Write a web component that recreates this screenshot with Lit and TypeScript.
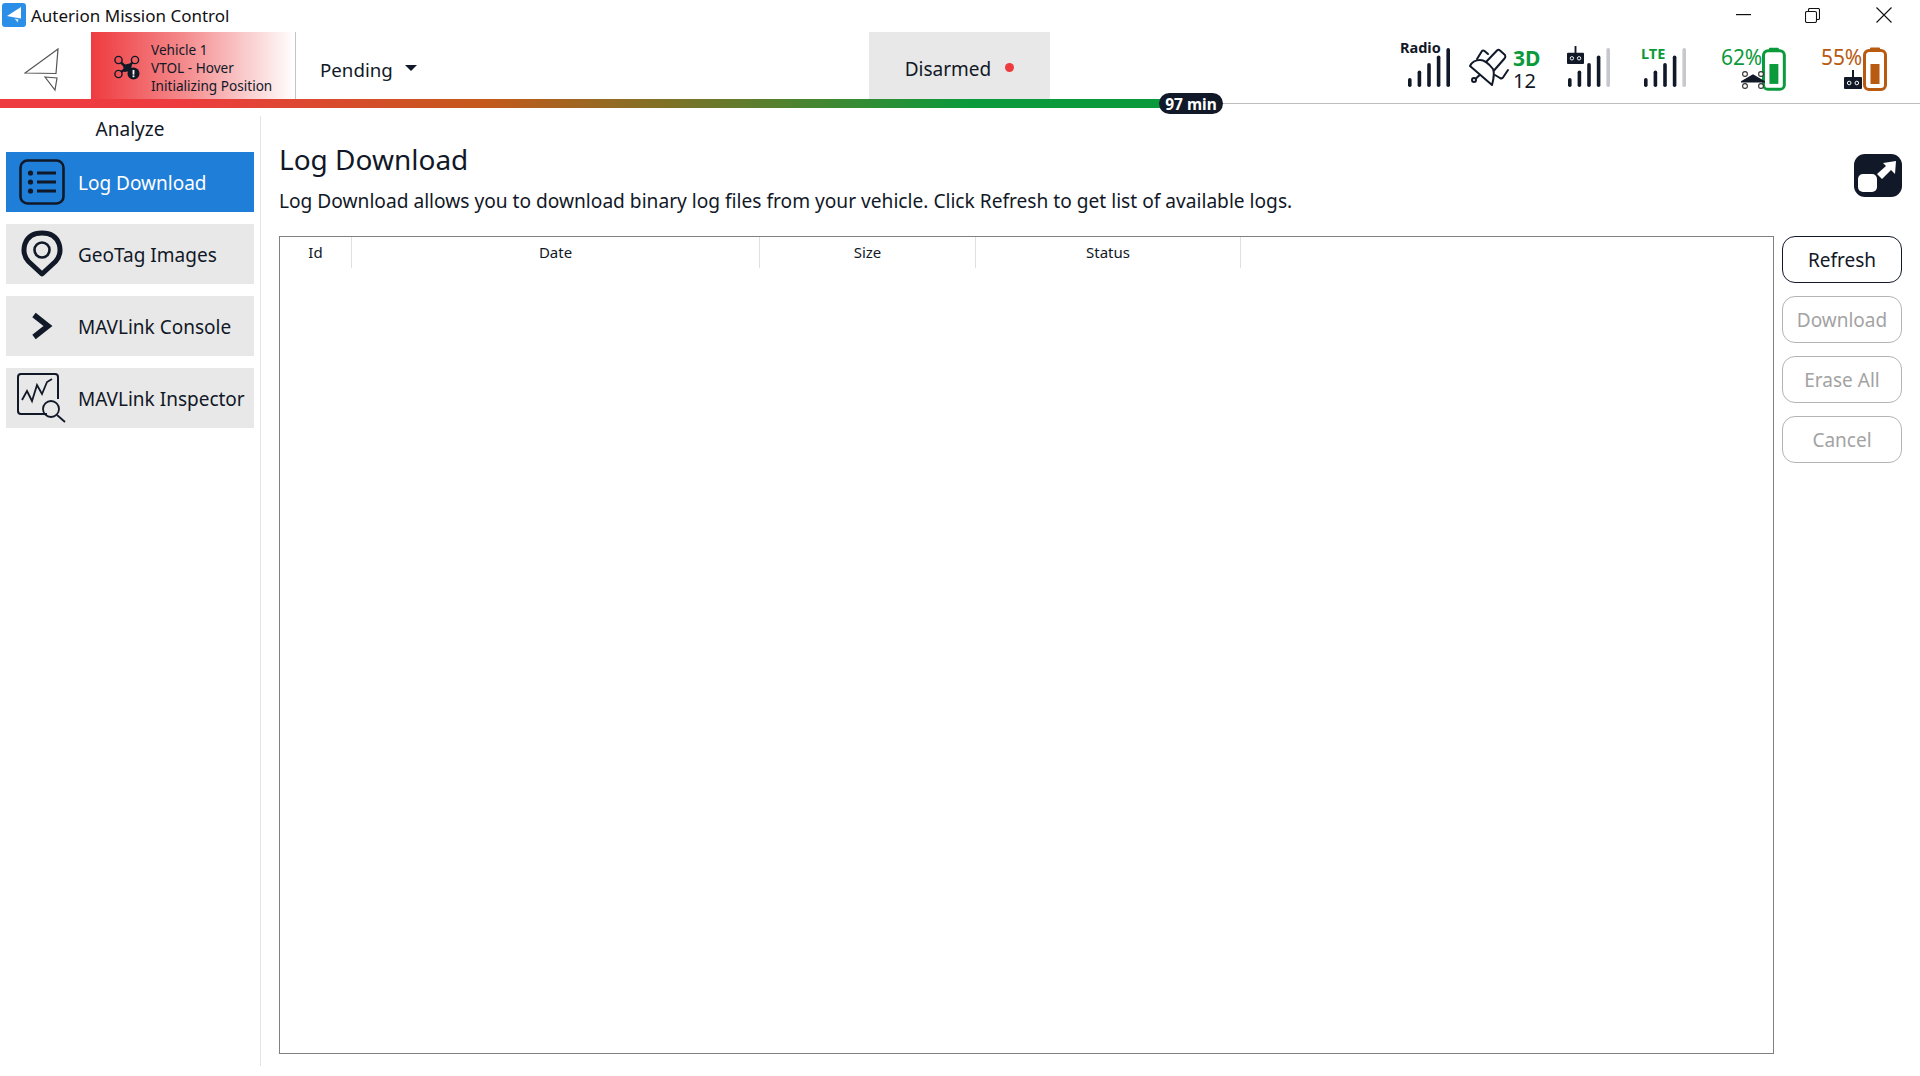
import { LitElement, html, css, svg, unsafeCSS } from "lit";
import { customElement } from "lit/decorators.js";

const INK = "#111827";
const GREEN = "#0b9a3b";
const ORANGE = "#b85a10";
const ink = unsafeCSS(INK);
const green = unsafeCSS(GREEN);
const orange = unsafeCSS(ORANGE);

const bars = (levels: number) => html`
  <svg class="bars" width="44" height="41" viewBox="0 0 44 41">
    ${[0, 1, 2, 3, 4].map((i) => {
      const h = 9 + i * 7.5;
      const on = i < levels;
      return svg`<rect x="${1 + i * 9.6}" y="${39 - h}" width="3.6" height="${h}" rx="1.8" fill="${on ? INK : "#c6c8cd"}"/>`;
    })}
  </svg>`;

const rcGlyph = (w: number, h: number) => html`
  <svg class="glyph" width="${w}" height="${h}" viewBox="0 0 18 19">
    <rect x="8" y="0" width="2" height="8" fill="${INK}"/>
    <rect x="0" y="7" width="18" height="12" rx="1" fill="${INK}"/>
    <circle cx="5.2" cy="13" r="1.8" fill="none" stroke="#fff" stroke-width="1"/>
    <circle cx="12.8" cy="13" r="1.8" fill="none" stroke="#fff" stroke-width="1"/>
  </svg>`;

const battery = (color: string) => html`
  <svg class="cell" width="24" height="44" viewBox="0 0 24 44">
    <path d="M8 1.5h8v3H8z" fill="${color}" stroke="${color}" stroke-width="2" stroke-linejoin="round"/>
    <rect x="1.5" y="3.5" width="21" height="39" rx="4.5" fill="#fff" stroke="${color}" stroke-width="3"/>
    <rect x="7.5" y="17" width="9" height="20" fill="${color}"/>
  </svg>`;

@customElement("app-root")
export class AppRoot extends LitElement {
  static styles = css`
    :host {
      display: flex;
      flex-direction: column;
      width: 1920px;
      height: 1076px;
      background: #fff;
      color: ${ink};
      font-family: "Noto Sans", "Open Sans", sans-serif;
      overflow: hidden;
    }
    .titlebar {
      height: 32px;
      display: flex;
      align-items: center;
      padding-left: 2px;
      font-size: 17px;
      color: #111;
      flex: none;
      box-sizing: border-box;
    }
    .app-icon { margin-right: 5px; margin-top: -2px; }
    .title { flex: 1; margin-top: -2px; }
    .win { display: flex; align-items: center; margin-top: -2px; }
    .win svg { display: block; }
    .win-min { margin-right: 54px; }
    .win-max { margin-right: 56px; }
    .win-close { margin-right: 28px; }

    .toolbar { height: 67px; display: flex; flex: none; }
    .logo { width: 91px; display: flex; align-items: center; padding: 9px 0 0 24px; box-sizing: border-box; flex: none; }
    .vehicle {
      width: 205px;
      flex: none;
      box-sizing: border-box;
      border-right: 1px solid #c4c4c4;
      background: linear-gradient(90deg, #ee3b3f 0%, #f4898b 45%, #ffffff 100%);
      display: flex;
      align-items: center;
      padding-left: 23px;
      gap: 11px;
      font-size: 13.6px;
      line-height: 18px;
    }
    .vehicle svg { flex: none; margin-top: 5px; }
    .vehicle .vtext { margin-top: 5px; white-space: nowrap; }
    .pending {
      width: 573px;
      flex: none;
      box-sizing: border-box;
      padding: 7px 0 0 24px;
      display: flex;
      align-items: center;
      gap: 12px;
      font-size: 18.7px;
    }
    .caret { width: 0; height: 0; border-left: 6px solid transparent; border-right: 6px solid transparent; border-top: 6px solid ${ink}; margin-top: -2px; }
    .armed {
      width: 181px;
      flex: none;
      background: #e8e8e8;
      display: flex;
      align-items: center;
      justify-content: center;
      gap: 14px;
      font-size: 19px;
      padding: 6px 0 0 0;
      box-sizing: border-box;
    }
    .dot { width: 9px; height: 9px; border-radius: 50%; background: #ee3b3f; margin-top: -3px; }

    .status { flex: 1; display: flex; align-items: flex-start; padding: 16px 0 0 350px; box-sizing: border-box; }
    .radio { position: relative; width: 44px; height: 41px; margin-left: 7px; flex: none; }
    .bars { display: block; }
    .radio .lbl { position: absolute; left: -7px; top: -9px; font-weight: 700; font-size: 14.5px; line-height: 16px; }
    .sat { margin: -6px -7px 0 9px; display: block; flex: none; }
    .gps { width: 44px; flex: none; }
    .gps b { display: block; color: ${green}; font-size: 21px; line-height: 20px; }
    .gps span { display: block; font-size: 20px; line-height: 20px; margin-top: 3px; }
    .rc-sig { position: relative; width: 44px; height: 41px; margin-left: 10px; flex: none; }
    .rc-sig .ic { position: absolute; left: 0; top: -2px; }
    .glyph { display: block; }
    .lte-sig { position: relative; width: 44px; height: 41px; margin-left: 32px; flex: none; }
    .lte-sig .lbl { position: absolute; left: -2px; top: -3px; font-weight: 700; font-size: 14.5px; line-height: 16px; color: ${green}; }
    .bat { position: relative; height: 45px; display: flex; justify-content: space-between; margin-top: -2px; flex: none; }
    .bat .cell { display: block; margin-top: 1px; }
    .bat .pct { font-size: 21px; line-height: 24px; margin-top: -1px; letter-spacing: -0.1px; }
    .bat .over { position: absolute; display: block; }
    .bat.a { margin-left: 34px; color: ${green}; width: 65px; }
    .bat.b { margin-left: 35px; color: ${orange}; width: 66px; }
    .bat.a .over { left: 20px; top: 25px; }
    .bat.b .over { left: 23px; top: 24px; }

    .progress { height: 9px; flex: none; position: relative; }
    .progress .rule { position: absolute; left: 0; right: 0; top: 4px; height: 1px; background: #bdbdbd; }
    .progress .fill {
      position: absolute; left: 0; top: 0; bottom: 0; width: 1180px;
      background: linear-gradient(90deg, #ee3b3f 0%, #ee3b3f 15%, #c4591b 41%, #0b9a3b 82%);
    }
    .badge {
      position: absolute; left: 1159px; top: -6px; width: 64px; height: 21px; border-radius: 11px;
      background: ${ink}; color: #fff; font-weight: 700; font-size: 15.5px;
      line-height: 22px; text-align: center;
    }

    .main { flex: 1; display: flex; min-height: 0; padding: 8px 0 10px; }
    .side { width: 261px; box-sizing: border-box; border-right: 1px solid #e4e4e4; padding: 0 6px; flex: none; }
    .side h2 { margin: 0; height: 36px; font-weight: 400; font-size: 19px; line-height: 26px; text-align: center; }
    .nav { display: flex; align-items: center; height: 60px; margin-bottom: 12px; background: #e8e8e8; font-size: 19px; width: 248px; }
    .nav.on { background: #1f7ed8; color: #fff; }
    .nav .ico { width: 72px; height: 60px; flex: none; display: flex; align-items: center; justify-content: center; }
    .nav .txt { white-space: nowrap; margin-top: 2px; }

    .content { flex: 1; display: grid; grid-template-columns: 1495px 120px; column-gap: 8px; grid-template-rows: auto 1fr; padding: 23px 0 0 18px; min-width: 0; }
    .head { grid-column: 1 / 3; display: flex; justify-content: space-between; height: 97px; box-sizing: border-box; }
    .head h1 { margin: 0; font-size: 28px; font-weight: 400; line-height: 40px; }
    .head p { margin: 8px 0 0; font-size: 19.15px; line-height: 28px; white-space: nowrap; }
    .expand { margin-top: 15px; display: block; }
    .table { border: 1px solid #808080; box-sizing: border-box; height: 818px; }
    .cols { display: grid; grid-template-columns: 72px 408px 216px 265px; height: 31px; font-size: 15px; line-height: 31px; text-align: center; }
    .cols div { border-right: 1px solid #e0e0e0; }
    .btns { display: flex; flex-direction: column; gap: 13px; }
    .btn { height: 47px; box-sizing: border-box; border: 1.5px solid ${ink}; border-radius: 13px; font-size: 19px; display: flex; align-items: center; justify-content: center; background: #fff; }
    .btn.off { border-color: #b4b4b4; color: #a3a3a3; }
  `;

  render() {
    return html`
      <div class="titlebar">
        <svg class="app-icon" width="24" height="24" viewBox="0 0 24 24">
          <rect width="24" height="24" rx="3" fill="#2b8fe8"/>
          <path d="M19 4v11.5l-9-1.5-5-1z" fill="#fff"/>
          <path d="M12.5 15.5l4 .7-.8 3.3z" fill="#cfe6fb"/>
        </svg>
        <span class="title">Auterion Mission Control</span>
        <div class="win">
          <svg class="win-min" width="15" height="2" viewBox="0 0 15 2"><rect width="15" height="1.2" fill="#111"/></svg>
          <svg class="win-max" width="15" height="15" viewBox="0 0 15 15" fill="none" stroke="#111" stroke-width="1.1"><rect x="0.5" y="3.5" width="11" height="11" rx="1.5"/><path d="M3.5 3V1.8q0-1.3 1.3-1.3h8.4q1.3 0 1.3 1.3v8.4q0 1.3-1.3 1.3H12"/></svg>
          <svg class="win-close" width="16" height="16" viewBox="0 0 16 16" stroke="#111" stroke-width="1.1"><path d="M.5.5l15 15M15.5.5l-15 15"/></svg>
        </div>
      </div>

      <div class="toolbar">
        <div class="logo">
          <svg width="36" height="44" viewBox="0 0 36 44" fill="none" stroke="#555" stroke-width="1.2">
            <path d="M34 1L1 25l31 .5z"/>
            <path d="M21 29l12 1-2 12z"/>
          </svg>
        </div>
        <div class="vehicle">
          <svg width="26" height="26" viewBox="0 0 26 26">
            <g fill="none" stroke="${INK}" stroke-width="1.4">
              <circle cx="4.5" cy="5" r="3.6"/><circle cx="21" cy="5" r="3.6"/><circle cx="4.5" cy="19" r="3.6"/>
            </g>
            <path d="M7 7.5l6 5.5-6 4M18.5 7.5L13 13" stroke="${INK}" stroke-width="2.4" fill="none"/>
            <path d="M9 10l9-2-1 8-7 1z" fill="${INK}"/>
            <circle cx="19.5" cy="18.5" r="6" fill="${INK}"/>
            <rect x="18.6" y="15" width="1.8" height="4.6" fill="#fff"/><rect x="18.6" y="20.4" width="1.8" height="1.8" fill="#fff"/>
          </svg>
          <div class="vtext">Vehicle 1<br />VTOL - Hover<br />Initializing Position</div>
        </div>
        <div class="pending">Pending <span class="caret"></span></div>
        <div class="armed"><span>Disarmed</span><span class="dot"></span></div>
        <div class="status">
          <div class="radio">${bars(5)}<span class="lbl">Radio</span></div>
          <svg class="sat" width="60" height="50" viewBox="0 0 60 50" fill="none" stroke="${INK}" stroke-width="2" stroke-linejoin="round" stroke-linecap="round">
            <path d="M10 24L32 43Q35 32 33 27Q26 18 20 18Q13 18 10 24z"/>
            <circle cx="14" cy="38" r="2"/><path d="M16 36.5l3-3"/>
            <path d="M26 20L37 8.5Q38.5 7 40 8.5L45 13Q46 15 44.5 16.5L34 28.5"/>
            <path d="M17 17l5-8q1-1 2.5 0l3.5 3"/>
            <path d="M35 33l5 3q2 1 3-.5l5-7.5"/>
          </svg>
          <div class="gps"><b>3D</b><span>12</span></div>
          <div class="rc-sig">${bars(4)}<span class="ic">${rcGlyph(17, 18)}</span></div>
          <div class="lte-sig">${bars(4)}<span class="lbl">LTE</span></div>
          <div class="bat a">
            <span class="pct">62%</span>${battery(GREEN)}
            <svg class="over" width="24" height="18" viewBox="0 0 24 18" fill="#fff" stroke="#333" stroke-width="1.1">
              <circle cx="4" cy="3" r="2.4"/><circle cx="20" cy="3" r="2.4"/><circle cx="4" cy="15" r="2.4"/><circle cx="20" cy="15" r="2.4"/>
              <path d="M0 11L12 4l12 7z" fill="${INK}" stroke="${INK}"/>
            </svg>
          </div>
          <div class="bat b">
            <span class="pct">55%</span>${battery(ORANGE)}
            <span class="over">${rcGlyph(18, 19)}</span>
          </div>
        </div>
      </div>

      <div class="progress">
        <div class="rule"></div>
        <div class="fill"></div>
        <div class="badge">97 min</div>
      </div>

      <div class="main">
        <aside class="side">
          <h2>Analyze</h2>
          <div class="nav on">
            <span class="ico">
              <svg width="46" height="46" viewBox="0 0 46 46" fill="none" stroke="${INK}" stroke-width="2.6">
                <rect x="1.5" y="1.5" width="43" height="43" rx="7"/>
                <circle cx="11.5" cy="14" r="2.6" fill="${INK}" stroke="none"/><circle cx="11.5" cy="23" r="2.6" fill="${INK}" stroke="none"/><circle cx="11.5" cy="32" r="2.6" fill="${INK}" stroke="none"/>
                <path d="M18 14h19M18 23h19M18 32h19" stroke-width="3"/>
              </svg>
            </span>
            <span class="txt">Log Download</span>
          </div>
          <div class="nav">
            <span class="ico">
              <svg width="42" height="48" viewBox="0 0 42 48" fill="none" stroke="${INK}">
                <path d="M21 44L7.5 31.5C-1 23 2 3 21 3s22 20 13.5 28.5z" stroke-width="5" stroke-linejoin="round"/>
                <circle cx="21" cy="20" r="7.5" stroke-width="2.6"/>
              </svg>
            </span>
            <span class="txt">GeoTag Images</span>
          </div>
          <div class="nav">
            <span class="ico">
              <svg width="24" height="28" viewBox="0 0 24 28" fill="none" stroke="${INK}" stroke-width="5.5"><path d="M4 3l14 11L4 25"/></svg>
            </span>
            <span class="txt">MAVLink Console</span>
          </div>
          <div class="nav">
            <span class="ico">
              <svg width="50" height="50" viewBox="0 0 50 50" fill="none" stroke="${INK}" stroke-width="1.8">
                <path d="M30 41H4q-3 0-3-3V4q0-3 3-3h34q3 0 3 3v22" stroke-width="2"/>
                <path d="M5 27l5-9 5 10 5-16 5 9 5-12 5-3"/>
                <circle cx="34" cy="36" r="8"/>
                <path d="M40 42l8 7"/>
              </svg>
            </span>
            <span class="txt">MAVLink Inspector</span>
          </div>
        </aside>
        <section class="content">
          <div class="head">
            <div>
              <h1>Log Download</h1>
              <p>Log Download allows you to download binary log files from your vehicle. Click Refresh to get list of available logs.</p>
            </div>
            <svg class="expand" width="48" height="43" viewBox="0 0 48 43">
              <rect width="48" height="43" rx="11" fill="${INK}"/>
              <rect x="4" y="20" width="19" height="18" rx="5" fill="#fff"/>
              <path d="M42 7L41 20 37 16 28 25 23 20 32 12 29 9z" fill="#fff"/>
            </svg>
          </div>
          <div class="table">
            <div class="cols"><div>Id</div><div>Date</div><div>Size</div><div>Status</div></div>
          </div>
          <div class="btns">
            <div class="btn">Refresh</div>
            <div class="btn off">Download</div>
            <div class="btn off">Erase All</div>
            <div class="btn off">Cancel</div>
          </div>
        </section>
      </div>
    `;
  }
}
